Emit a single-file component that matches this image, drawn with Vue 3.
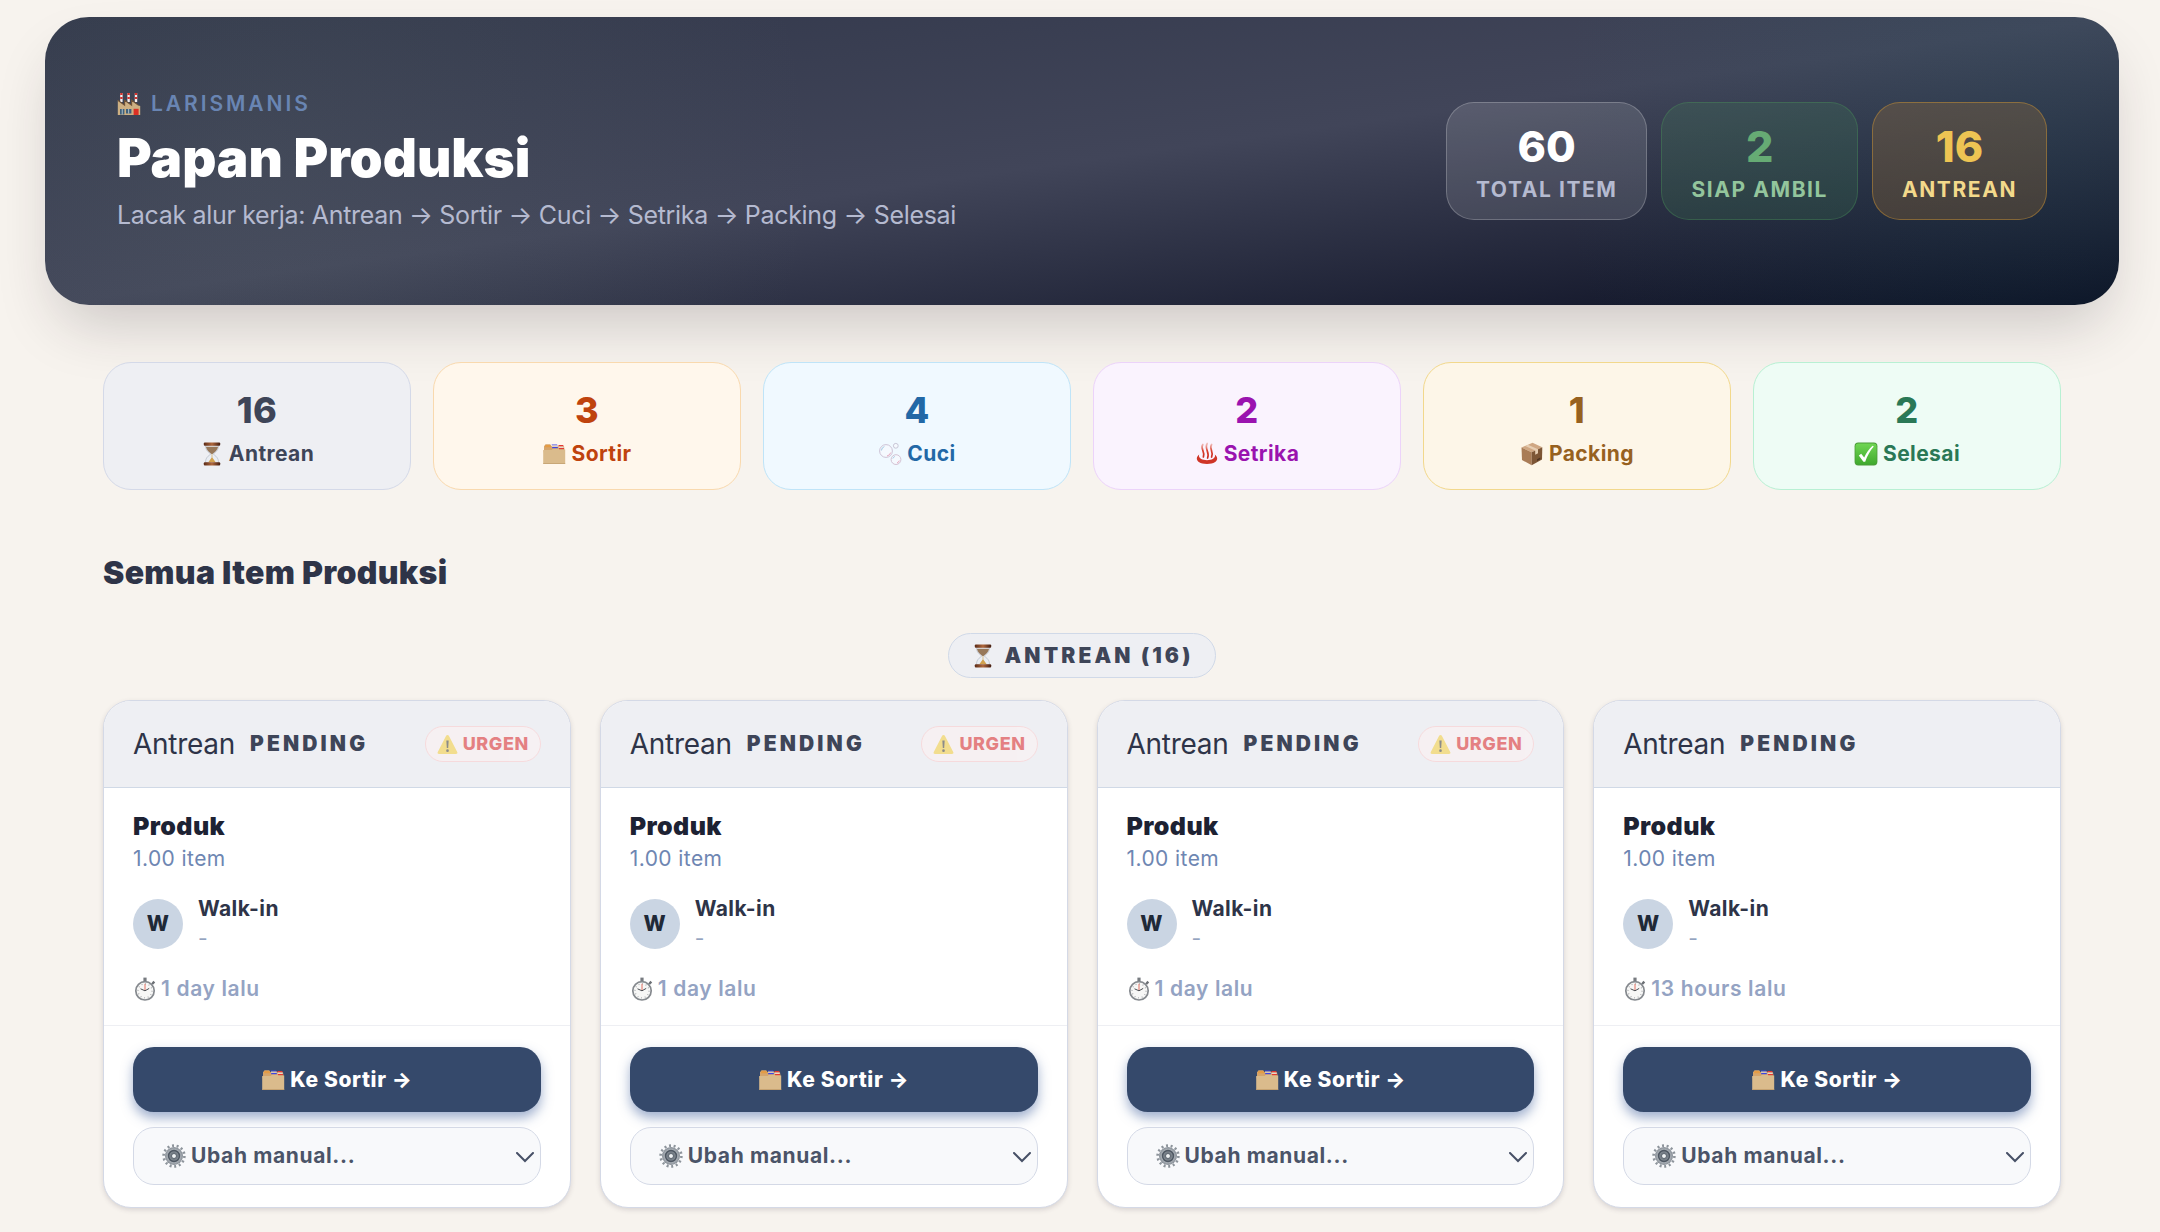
<script setup>
import { ref } from 'vue'

const summary = [
  { value: 60, label: 'Total item', tone: 'total' },
  { value: 2, label: 'Siap ambil', tone: 'ready' },
  { value: 16, label: 'Antrean', tone: 'queue' },
]

const stages = [
  { key: 'antrean', value: 16, label: 'Antrean', icon: 'hourglass' },
  { key: 'sortir', value: 3, label: 'Sortir', icon: 'folder' },
  { key: 'cuci', value: 4, label: 'Cuci', icon: 'bubbles' },
  { key: 'setrika', value: 2, label: 'Setrika', icon: 'steam' },
  { key: 'packing', value: 1, label: 'Packing', icon: 'box' },
  { key: 'selesai', value: 2, label: 'Selesai', icon: 'check' },
]

const items = ref([
  { id: 1, urgent: true, age: '1 day lalu', move: '' },
  { id: 2, urgent: true, age: '1 day lalu', move: '' },
  { id: 3, urgent: true, age: '1 day lalu', move: '' },
  { id: 4, urgent: false, age: '13 hours lalu', move: '' },
])
</script>

<template>
  <svg class="sprite" aria-hidden="true">
    <defs>
      <linearGradient id="wood" x1="0" x2="1"><stop offset="0" stop-color="#5a2a16" /><stop offset=".5" stop-color="#b0683c" /><stop offset="1" stop-color="#431d10" /></linearGradient>
      <linearGradient id="leaf" x1="0" y1="0" x2="0" y2="1"><stop offset="0" stop-color="#6fd653" /><stop offset="1" stop-color="#3fa92d" /></linearGradient>
      <linearGradient id="ember" gradientUnits="userSpaceOnUse" x1="0" y1="1" x2="0" y2="16"><stop offset="0" stop-color="#e9988c" stop-opacity=".5" /><stop offset=".5" stop-color="#d9402f" /><stop offset="1" stop-color="#c92a1f" /></linearGradient>
      <radialGradient id="steel"><stop offset="0" stop-color="#d5dadd" /><stop offset=".35" stop-color="#6a737c" /><stop offset=".65" stop-color="#b1b7bd" /><stop offset="1" stop-color="#858c94" /></radialGradient>
    </defs>
    <symbol id="factory" viewBox="0 0 24 24">
      <path d="M3.200 1h2.400v9H3.200zM10.400 1h2.400v9h-2.400zM17.800 1h2.400v9h-2.400z" fill="#f4eeee" />
      <path d="M3.200 1h2.400v2H3.200zM10.400 1h2.400v2h-2.400zM17.800 1h2.400v2h-2.400zM3.200 5h2.400v2H3.200zM10.400 5h2.400v2h-2.400zM17.800 5h2.400v2h-2.400z" fill="#d3322d" />
      <path d="M.8 23V8.200l6.800 5V8.200l7 5V8.200l7 5.200 1.600.6v9z" fill="#cdb083" />
      <path d="M.8 8.200l6.800 5V8.200l7 5V8.200l7 5.200" fill="none" stroke="#6f5237" stroke-width="1.100" />
      <path d="M3 17h4.400v5.600H3zM9 17h5.400v4.600H9z" fill="#3f617c" />
      <path d="M4.800 17h.8v5.600h-.8zM11.300 17h.8v4.600h-.8z" fill="#c9d4d8" />
      <path d="M16.600 16.800h5V23h-5z" fill="#dc3024" />
    </symbol>
    <symbol id="hourglass" viewBox="0 0 24 24">
      <path d="M5.500 3.500h13c0 5-3 6.600-5.300 8.500 2.300 1.900 5.300 3.500 5.300 8.500h-13c0-5 3-6.600 5.300-8.500-2.300-1.900-5.300-3.500-5.300-8.500z" fill="#e9edf3" stroke="#b3bac6" stroke-width=".7" />
      <path d="M5.900 4.800h12.200c-.6 3.600-3.200 5-5.600 7.200h-1c-2.400-2.200-5-3.600-5.600-7.200z" fill="#97785a" />
      <path d="M11.700 12h.6v3.600l3.200 4.400h-7l3.200-4.400z" fill="#d2a24e" />
      <rect x="3.800" y=".6" width="16.400" height="3.200" rx="1" fill="url(#wood)" />
      <rect x="3.800" y="20.200" width="16.400" height="3.200" rx="1" fill="url(#wood)" />
    </symbol>
    <symbol id="folder" viewBox="0 0 24 24">
      <path d="M2 7.500V4.200l1.600-2h4.600l1.400 2H22l.6 4v2H1.600z" fill="#d6a56b" />
      <path d="M3.400 3h4.800l1.200 2.300H3z" fill="#e49b45" />
      <path d="M9.600 2.400h5.400l.8 1H10zM10.200 5h5.600v1.300h-5.600z" fill="#3b44e6" />
      <path d="M16.400 3h4.800l.5 1.400h-5zM17 6h5v1.300h-5z" fill="#e33a32" />
      <path d="M10 3.600h5.800v1.200H10zM16.600 4.500h5v1.400h-5z" fill="#e9d7c8" />
      <path d="M1.200 8h8.600l1-1.300h5.600l1 .9h5.800v14.200H1.200z" fill="#dabb8c" />
      <path d="M1.200 21h22v.9h-22z" fill="#c6a372" />
    </symbol>
    <symbol id="bubbles" viewBox="0 0 24 24">
      <g stroke-width="1" fill="#f6f9fe" fill-opacity=".8">
        <circle cx="8" cy="9" r="6.400" stroke="#cdc3d6" />
        <circle cx="18" cy="17.600" r="4.900" stroke="#d3c3d4" />
        <circle cx="17.800" cy="3.800" r="2.400" stroke="#c8c6d6" />
      </g>
      <path d="M3.400 8.500a4.700 4.700 0 0 1 3-4M14.800 16.500a3.200 3.200 0 0 1 2-2" stroke="#9fc9e2" stroke-width="1" fill="none" />
      <path d="M9 14a5 5 0 0 0 3.700-3.400M19 21a3.500 3.500 0 0 0 2.300-2.400" stroke="#e6a7bd" stroke-width="1" fill="none" />
    </symbol>
    <symbol id="steam" viewBox="0 0 24 24">
      <path d="M4.200 12.500c-4.400 3.300-3.200 9.500 7.800 9.500s12.200-6.200 7.800-9.500c1.200 3.700-2.400 5.700-7.800 5.700s-9-2-7.800-5.700z" fill="#cf3527" />
      <g stroke="url(#ember)" stroke-width="1.700" fill="none" stroke-linecap="round">
        <path d="M7.800 2.500c-3 4 2.600 6.500.6 12.500" />
        <path d="M12.200 1.500c-3.200 5 2.800 8.500.4 14.500" />
        <path d="M16.600 2.500c-3 4 2.400 6.500 0 12.500" />
      </g>
    </symbol>
    <symbol id="box" viewBox="0 0 24 24">
      <path d="M1.500 5.500L12.500.8l9.800 4.400-10.600 5z" fill="#cfa783" />
      <path d="M1.500 5.500l10.200 4.700v13L2 18z" fill="#a97c56" />
      <path d="M22.300 5.200L11.700 10.200v13L22 17.600z" fill="#7d5636" />
      <path d="M5.200 3.900L8 2.800l10 4.500v4l-2.800 1.400V8.500z" fill="#e6cdb2" />
      <path d="M17 17.300l3.300-1.700v1.700L17 19z" fill="#4c3322" />
    </symbol>
    <symbol id="check" viewBox="0 0 24 24">
      <rect x=".6" y=".6" width="22.800" height="22.800" rx="3.600" fill="#4a9c38" />
      <rect x="1.400" y="1.400" width="21.200" height="21.200" rx="3" fill="url(#leaf)" />
      <path d="M4.800 13.400l2.400-1.600 3 3.600C12.500 10.500 15 7 18.600 3.800l1.200.8C16 9 13.400 13.500 11.200 19.800H9.400z" fill="#fff" />
    </symbol>
    <symbol id="warning" viewBox="0 0 24 24">
      <path d="M12 1.200c.8 0 1.300.4 1.700 1.100l9.400 18.200c.7 1.400 0 2.300-1.500 2.300H2.400C.9 22.800.2 21.900.9 20.500l9.400-18.200c.4-.7.900-1.100 1.700-1.100z" fill="#f6cf3c" />
      <path d="M10.700 7.400h2.600l-.5 8.600h-1.600z" fill="#3c3a35" />
      <circle cx="12" cy="19" r="1.500" fill="#3c3a35" />
    </symbol>
    <symbol id="stopwatch" viewBox="0 0 24 24">
      <path d="M10.400.6h3.200v4h-3.200z" fill="#777b80" />
      <path d="M18.200 6.400l2.200-2.600 1.800 1.600-2.200 2.400z" fill="#6c7075" />
      <circle cx="12" cy="13.800" r="9.200" fill="#f7f7f6" stroke="#85898e" stroke-width="1.700" />
      <circle cx="12" cy="13.800" r="7" fill="none" stroke="#9a9da1" stroke-width="1.200" stroke-dasharray=".8 2.865" />
      <path d="M12 6.800v7" stroke="#dd4b3b" stroke-width=".8" />
      <path d="M7.500 11.800l4.500 2 4.200-2.400" stroke="#4c4f54" stroke-width="1" fill="none" />
    </symbol>
    <symbol id="gear" viewBox="0 0 24 24">
      <circle cx="12" cy="12" r="10.400" fill="none" stroke="#8d949b" stroke-width="2.600" stroke-dasharray="2 2.667" />
      <circle cx="12" cy="12" r="9" fill="url(#steel)" />
      <circle cx="12" cy="12" r="5.400" fill="none" stroke="#4f5863" stroke-width="1.600" />
      <circle cx="12" cy="12" r="2.500" fill="#eef1f3" stroke="#59626c" stroke-width="1" />
    </symbol>
  </svg>

  <main class="page">
    <header class="hero">
      <div>
        <p class="eyebrow"><svg class="emoji" aria-hidden="true"><use href="#factory" /></svg>LARISMANIS</p>
        <h1>Papan Produksi</h1>
        <p class="lead">Lacak alur kerja: Antrean → Sortir → Cuci → Setrika → Packing → Selesai</p>
      </div>
      <dl class="summary">
        <div v-for="s in summary" :key="s.tone" class="stat" :class="s.tone">
          <dd>{{ s.value }}</dd>
          <dt>{{ s.label }}</dt>
        </div>
      </dl>
    </header>

    <div class="content">
      <section class="stages">
        <article v-for="s in stages" :key="s.key" class="stage" :class="s.key">
          <strong>{{ s.value }}</strong>
          <span class="stage-label"><svg class="emoji" aria-hidden="true"><use :href="'#' + s.icon" /></svg>{{ s.label }}</span>
        </article>
      </section>

      <h2>Semua Item Produksi</h2>

      <h3 class="group"><svg class="emoji" aria-hidden="true"><use href="#hourglass" /></svg>ANTREAN (16)</h3>

      <section class="cards">
        <article v-for="item in items" :key="item.id" class="card">
          <header class="card-head">
            <span class="state">Antrean</span>
            <span class="code">PENDING</span>
            <span v-if="item.urgent" class="urgent"><svg aria-hidden="true"><use href="#warning" /></svg>URGEN</span>
          </header>
          <div class="card-body">
            <h4>Produk</h4>
            <p class="qty">1.00 item</p>
            <div class="customer">
              <span class="avatar">W</span>
              <div>
                <p class="name">Walk-in</p>
                <p class="phone">-</p>
              </div>
            </div>
            <p class="age"><svg class="emoji" aria-hidden="true"><use href="#stopwatch" /></svg>{{ item.age }}</p>
          </div>
          <footer class="card-foot">
            <button type="button"><svg class="emoji" aria-hidden="true"><use href="#folder" /></svg>Ke Sortir →</button>
            <div class="manual">
              <svg class="emoji gear" aria-hidden="true"><use href="#gear" /></svg>
              <select v-model="item.move" aria-label="Ubah manual">
                <option value="">Ubah manual...</option>
                <option v-for="s in stages" :key="s.key" :value="s.key">{{ s.label }}</option>
              </select>
              <svg class="chevron" viewBox="0 0 18 11" aria-hidden="true"><path d="M1 1l8 8 8-8" /></svg>
            </div>
          </footer>
        </article>
      </section>
    </div>
  </main>
</template>

<style>
body {
  background: #f7f3ee;
}
</style>

<style scoped>
* {
  box-sizing: border-box;
  margin: 0;
}
.sprite {
  position: absolute;
  width: 0;
  height: 0;
}
.page {
  padding: 17px 41px 22px 45px;
  font-family: Inter, "Liberation Sans", sans-serif;
  font-size: 21px;
  line-height: 30px;
  letter-spacing: 0.02em;
  color: #2e3448;
}
.emoji {
  width: 24px;
  height: 24px;
  flex: none;
}
.hero {
  display: flex;
  align-items: center;
  justify-content: space-between;
  padding: 72px;
  border-radius: 44px;
  background:
    radial-gradient(circle at 10% 50%, rgba(120, 140, 130, 0.13), transparent 30%),
    radial-gradient(circle at 96% 40%, rgba(40, 100, 110, 0.17), transparent 24%),
    linear-gradient(to bottom right, #31374a 0%, #414559 50%, #0a0e21 100%);
  box-shadow: 0 30px 60px -14px rgba(40, 30, 40, 0.22);
}
.eyebrow {
  display: flex;
  align-items: center;
  gap: 10px;
  line-height: 29px;
  font-weight: 600;
  letter-spacing: 0.14em;
  color: #6985b3;
}
h1 {
  margin-top: 11px;
  font-size: 53px;
  line-height: 58px;
  font-weight: 900;
  letter-spacing: 0;
  color: #fff;
}
.lead {
  margin-top: 10px;
  font-size: 25px;
  line-height: 36px;
  letter-spacing: -0.013em;
  color: #b5bad0;
}
.summary {
  display: flex;
  gap: 14px;
}
.stat {
  padding: 18px 29px 15px;
  border: 1px solid;
  border-radius: 28px;
  text-align: center;
}
.stat dd {
  font-size: 43px;
  line-height: 51px;
  font-weight: 800;
  letter-spacing: 0;
}
.stat dt {
  margin-top: 3px;
  line-height: 29px;
  font-weight: 700;
  letter-spacing: 0.075em;
  text-transform: uppercase;
}
.total {
  background: rgba(255, 255, 255, 0.12);
  border-color: rgba(255, 255, 255, 0.22);
  color: #fff;
}
.total dt {
  color: #b5bad0;
}
.ready {
  background: rgba(74, 150, 90, 0.18);
  border-color: rgba(74, 150, 90, 0.36);
  color: #66ab74;
}
.ready dt {
  color: #93c59c;
}
.queue {
  background: rgba(180, 125, 50, 0.25);
  border-color: rgba(210, 150, 50, 0.45);
  color: #edc453;
}
.queue dt {
  color: #f3d98b;
}
.content {
  padding: 0 58px;
}
.stages {
  display: grid;
  grid-template-columns: repeat(6, 1fr);
  gap: 22px;
  margin-top: 57px;
}
.stage {
  display: flex;
  flex-direction: column;
  align-items: center;
  gap: 7px;
  padding: 25px 20px 21px;
  border: 1px solid;
  border-radius: 28px;
}
.stage strong {
  font-size: 36px;
  line-height: 44px;
  font-weight: 800;
}
.stage-label {
  display: flex;
  align-items: center;
  gap: 5px;
  line-height: 29px;
  font-weight: 700;
}
.antrean { background: #eeeff3; border-color: #d4d9e8; color: #3e4558; }
.sortir { background: #fff7ec; border-color: #f9d9ae; color: #bf430d; }
.cuci { background: #f0f9ff; border-color: #bfe4f8; color: #2268a6; }
.setrika { background: #faf3fe; border-color: #ecd3fa; color: #9a13af; }
.packing { background: #fdf6e8; border-color: #f2d88c; color: #97611f; }
.selesai { background: #eefcf5; border-color: #b8f0d3; color: #2a7856; }
h2 {
  margin-top: 59px;
  font-size: 32px;
  line-height: 48px;
  font-weight: 900;
  letter-spacing: 0.01em;
}
.group {
  display: flex;
  align-items: center;
  gap: 10px;
  width: fit-content;
  margin: 36px auto 22px;
  padding: 7px 22px;
  border: 1px solid #d0d9e8;
  border-radius: 23px;
  background: #eeeff3;
  font-size: 21px;
  line-height: 29px;
  font-weight: 900;
  letter-spacing: 0.15em;
  color: #3e4558;
}
.cards {
  display: grid;
  grid-template-columns: repeat(4, 1fr);
  gap: 29px;
}
.card {
  overflow: hidden;
  border: 1px solid #d4d9e6;
  border-radius: 28px;
  background: #fff;
  box-shadow: 0 2px 5px rgba(60, 50, 70, 0.16);
}
.card-head {
  display: flex;
  align-items: center;
  gap: 15px;
  height: 87px;
  padding: 0 29px;
  border-bottom: 1px solid #d0d9e6;
  background: #eeeff3;
}
.state {
  font-size: 28px;
  letter-spacing: -0.01em;
}
.code {
  font-weight: 900;
  letter-spacing: 0.15em;
  color: #3e4558;
}
.urgent {
  display: flex;
  align-items: center;
  gap: 5px;
  margin-left: auto;
  padding: 2px 11px;
  border: 1px solid #fecaca;
  border-radius: 18px;
  background: #fef2f2;
  font-size: 18px;
  font-weight: 800;
  letter-spacing: 0.03em;
  color: #dc2626;
  opacity: 0.55;
}
.urgent svg {
  width: 21px;
  height: 21px;
}
.card-body {
  padding: 21px 29px;
}
h4 {
  font-size: 25px;
  line-height: 34px;
  font-weight: 900;
  color: #1d2233;
}
.qty {
  margin-top: 1px;
  color: #6e86b2;
}
.customer {
  display: flex;
  align-items: center;
  gap: 15px;
  margin: 20px 0;
}
.avatar {
  width: 50px;
  height: 50px;
  border-radius: 50%;
  background: #cad5e3;
  line-height: 50px;
  text-align: center;
  font-weight: 800;
  color: #1f2937;
}
.name {
  font-weight: 700;
}
.phone {
  color: #94a3c0;
}
.age {
  display: flex;
  align-items: center;
  gap: 4px;
  font-weight: 600;
  letter-spacing: 0.03em;
  color: #94a3c3;
}
.card-foot {
  display: flex;
  flex-direction: column;
  gap: 15px;
  padding: 21px 29px 22px;
  border-top: 1px solid #eeeff3;
}
button {
  display: flex;
  align-items: center;
  justify-content: center;
  gap: 5px;
  height: 65px;
  border: 0;
  border-radius: 21px;
  background: #35496b;
  box-shadow: 0 6px 12px rgba(66, 98, 158, 0.5);
  font: inherit;
  font-weight: 800;
  letter-spacing: 0.03em;
  color: #fff;
}
.manual {
  position: relative;
}
.gear {
  position: absolute;
  left: 29px;
  top: 17px;
}
.chevron {
  position: absolute;
  right: 7px;
  top: 25px;
  width: 18px;
  height: 11px;
  fill: none;
  stroke: #475066;
  stroke-width: 2;
  stroke-linecap: round;
  pointer-events: none;
}
select {
  display: block;
  width: 100%;
  height: 58px;
  padding: 0 40px 0 57px;
  border: 1px solid #d4d9e6;
  border-radius: 21px;
  background: #f8f9fb;
  appearance: none;
  font: inherit;
  font-weight: 700;
  letter-spacing: 0.03em;
  color: #4b5468;
}
</style>
